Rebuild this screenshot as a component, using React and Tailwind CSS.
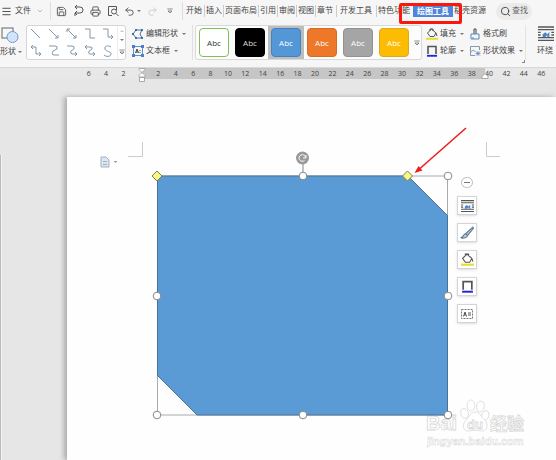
import React from 'react';
import { Menu, ChevronDown, Save, Printer, Undo2, Redo2, Search } from 'lucide-react';

const homeTabs = ['插入', '页面布局', '引用', '审阅', '视图', '章节'];

const swatches = [
  { name: '白色', style: 'bg-white border-[#83bd5b] text-[#333]' },
  { name: '黑色', style: 'bg-black border-black text-[#ddd]' },
  { name: '蓝色', style: 'bg-[#5497d6] border-[#4083c5] text-white', active: true },
  { name: '橙色', style: 'bg-[#ed7829] border-[#d66d25] text-white' },
  { name: '灰色', style: 'bg-[#a5a5a5] border-[#929292] text-white' },
  { name: '黄色', style: 'bg-[#fdbc04] border-[#e0a91a] text-white' },
];

const connectors = [
  'M1 1l9 9',
  'M1 1l9 9M7 10h3v-3',
  'M1 1l9 9M7 10h3v-3M4 1H1v3',
  'M1 1h5v9h5',
  'M1 1h5v8h5M9 7l2 2-2 2',
  'M1 2h5v7h5M9 7l2 2-2 2M3 0L1 2l2 2',
  'M1 1h6q3 0 2 3l-4 2q-2 4 1 4h5',
  'M1 1h5q3 0 2 3l-3 2q-1 3 1 3h5M9 7l2 2-2 2',
  'M1 2h5q3 0 2 2l-3 2q-1 3 1 3h5M9 7l2 2-2 2M3 0L1 2l2 2',
  'M9 2C6 0 2 1 3 4s6 2 6 5-5 3-7 1',
];

const marks = [6, 4, 2, '', ...Array.from({ length: 23 }, (_, i) => (i + 1) * 2)];

const handles = [
  [448, 176],
  [303, 176],
  [157, 296],
  [448, 296],
  [157, 415],
  [303, 415],
  [448, 415],
];

function Caret() {
  return (
    <svg className="w-1 h-1 shrink-0" viewBox="0 0 4 4">
      <path d="M0 1h4L2 3z" fill="#777" />
    </svg>
  );
}

function Icon({ children, className = 'w-3 h-3' }) {
  return (
    <svg className={`${className} shrink-0`} viewBox="0 0 12 12" fill="none" stroke="#555" strokeWidth="1">
      {children}
    </svg>
  );
}

function MoreIcon() {
  return (
    <Icon className="w-2 h-2">
      <path d="M2 3h8M3 6h6L6 9z" />
    </Icon>
  );
}

function FillIcon({ className }) {
  return (
    <Icon className={className}>
      <path d="M5.500 1L10 5 8 8.500H4L1.500 5zM4 3V1h3v2M10 5l1 3" />
      <path d="M0 10.800h12" stroke="#e6df2b" strokeWidth="2" />
    </Icon>
  );
}

function OutlineIcon({ className }) {
  return (
    <Icon className={className}>
      <path d="M2 9V1.500h8V9" strokeWidth="1.600" />
      <path d="M1 10.800h10" stroke="#2121d6" strokeWidth="1.800" />
    </Icon>
  );
}

function WrapIcon({ className }) {
  return (
    <Icon className={className}>
      <path d="M0 1.500h12M0 3.500h12M0 5.500h2M10 5.500h2M0 7.500h2M10 7.500h2M0 9.500h12M0 11.500h12" />
      <path d="M3.500 9V7l2-1.500L7 7l1.500-2v4H7V7.500L5.500 9z" fill="#4a84c4" stroke="none" />
    </Icon>
  );
}

function ToolButton({ icon, label, caret = true }) {
  return (
    <button className="flex items-center gap-[2px] h-[17px] whitespace-nowrap">
      {icon}
      <span>{label}</span>
      {caret && <span className="pl-[2px]"><Caret /></span>}
    </button>
  );
}

function TopBar() {
  return (
    <div className="flex items-center h-[22px] whitespace-nowrap">
      <button aria-label="菜单" className="w-[15px] pl-px">
        <Menu className="w-[11px] h-[11px]" strokeWidth={2} />
      </button>
      <button className="flex items-center gap-[5px] w-[35px]">
        文件
        <ChevronDown className="w-2 h-2 shrink-0 text-[#999]" />
      </button>
      <div className="flex items-center w-[133px] h-[18px] border-x border-[#dedede] pl-[5px] pr-2 text-[#555]">
        <button aria-label="保存" className="w-[17px]"><Save className="w-[11px] h-[11px]" /></button>
        <button aria-label="输出" className="w-[17px]">
          <Icon>
            <path d="M2 2h5q3 0 3 3t-3 3H2M4 0L2 2l2 2M4 6L2 8l2 2M2 8v3" />
          </Icon>
        </button>
        <button aria-label="打印" className="w-[17px]"><Printer className="w-[11px] h-[11px]" /></button>
        <button aria-label="打印预览" className="w-[18px]">
          <Icon>
            <path d="M5 10.500H1.500v-9h8V5" />
            <circle cx="7" cy="6.500" r="2.500" />
            <path d="M9 8.500l2.500 2.500" />
          </Icon>
        </button>
        <button aria-label="撤销" className="flex items-center gap-[2px] w-[23px]">
          <Undo2 className="w-[11px] h-[11px]" />
          <Caret />
        </button>
        <button aria-label="恢复" className="w-[19px] text-[#ccc]"><Redo2 className="w-[11px] h-[11px]" /></button>
        <button aria-label="更多"><MoreIcon /></button>
      </div>

      <nav className="relative flex items-center pl-[2px]">
        <button className="pl-px pr-[2px]">开始</button>
        {homeTabs.map((tab) => (
          <button key={tab} className="border-l border-[#ccc] px-px">{tab}</button>
        ))}
        <button className="ml-[2px] border-l border-[#ccc] pl-[3px] pr-1">开发工具</button>
        <button className="border-l border-[#ccc] pl-px pr-[3px]">特色功能</button>
        <button className="bg-[#4f86dc] text-white font-bold px-1 h-[11px] leading-[11px]">绘图工具</button>
        <button className="pl-px">稻壳资源</button>
        {/* callout around the active tab */}
        <div className="absolute right-[24px] -top-[2px] w-[63px] h-[21px] border-[3px] border-[#fb170c] rounded-[2px] pointer-events-none" />
      </nav>

      <label className="flex items-center gap-px ml-[10px] h-[17px] w-9 rounded-full bg-[#ebebeb] pl-1 text-[#666]">
        <Search className="w-[11px] h-[11px] shrink-0 text-[#444]" />
        <input aria-label="查找" placeholder="查找" className="w-5 bg-transparent outline-none placeholder:text-[#666]" />
      </label>
    </div>
  );
}

function Ribbon() {
  return (
    <div className="relative flex h-[45px] pt-[3px] pb-[7px]">
      <button className="flex flex-col w-[26px] shrink-0 items-start gap-[3px]">
        <svg className="w-[18px] h-[18px] ml-px" viewBox="0 0 18 18">
          <rect x="1" y="3" width="11" height="10" fill="none" stroke="#666" />
          <circle cx="11.500" cy="12" r="5.500" fill="#d3e3f8" stroke="#6f9bd2" />
        </svg>
        <span className="flex items-center gap-[2px] whitespace-nowrap">形状<Caret /></span>
      </button>

      <div className="flex w-[100px] h-[35px] shrink-0 border border-[#d5d5d5] rounded-[3px] bg-white">
        <div className="grid grid-cols-5 flex-1 items-center justify-items-center">
          {connectors.map((d, i) => (
            <button key={d} aria-label={`连接符 ${i + 1}`}>
              <svg className="w-3 h-3" viewBox="0 0 12 12" fill="none" stroke="#8397a9" strokeWidth="1">
                <path d={d} />
              </svg>
            </button>
          ))}
        </div>
        <div className="flex flex-col w-2 items-center justify-around border-l border-[#eee]">
          <span className="rotate-180 opacity-40 flex"><Caret /></span>
          <Caret />
          <MoreIcon />
        </div>
      </div>

      <div className="w-[67px] shrink-0 pl-[6px] border-r border-[#e0e0e0]">
        <ToolButton
          label="编辑形状"
          icon={
            <Icon>
              <path d="M4 2h6L8 6l2 4H4L1 6z" stroke="#4c6f9e" />
              <path d="M3 1h2v2H3zM9 1h2v2H9zM0 5h2v2H0zM3 9h2v2H3zM9 9h2v2H9z" fill="#3f6ca6" stroke="none" />
            </Icon>
          }
        />
        <ToolButton
          label="文本框"
          icon={
            <Icon>
              <rect x="1.500" y="1.500" width="9" height="9" stroke="#5c92d1" />
              <path d="M0 0h3v3H0zM9 0h3v3H9zM0 9h3v3H0zM9 9h3v3H9z" fill="#4681c8" stroke="none" />
              <path d="M3.500 8L5 4l1.500 4M4 7h2M8 5v1M8 7v1" stroke="#444" />
            </Icon>
          }
        />
      </div>

      <div className="flex w-[227px] h-[35px] shrink-0 ml-[2px] border border-[#d8d8d8] rounded-[3px] bg-[#fcfcfc]">
        {swatches.map((s) => (
          <div key={s.name} className={s.active ? 'w-9 px-[3px] py-[2px] bg-[#bdbdbd]' : 'w-9 px-[3px] py-[2px]'}>
            <button aria-label={s.name} className={`w-full h-[29px] border rounded-[4px] text-[8px] font-['Open_Sans',sans-serif] ${s.style}`}>
              Abc
            </button>
          </div>
        ))}
        <div className="flex flex-1 items-center justify-center">
          <MoreIcon />
        </div>
      </div>

      <div className="grid grid-cols-[43px_1fr] w-[104px] shrink-0 pl-1 border-r border-[#e4e4e4] content-start">
        <ToolButton label="填充" icon={<FillIcon />} />
        <ToolButton
          label="格式刷"
          caret={false}
          icon={
            <Icon>
              <path d="M5 6V1h2v5" stroke="#444" />
              <path d="M2 6h8v5H2zM4 11V9" stroke="#5a87ba" />
            </Icon>
          }
        />
        <ToolButton label="轮廓" icon={<OutlineIcon />} />
        <ToolButton
          label="形状效果"
          icon={
            <Icon>
              <path d="M6 10.500H1.500v-9h9V5M1.500 7l3-2 2 2" stroke="#8798aa" />
              <path d="M9 6v5M6.500 8.500h5M7 6.500l4 4M11 6.500l-4 4" stroke="#537fb2" strokeWidth="0.700" />
            </Icon>
          }
        />
      </div>
      <span className="absolute right-[31px] bottom-1 w-[3px] h-[3px] border-r border-b border-[#888]" />

      <button className="flex flex-col flex-1 min-w-0 items-start pl-[11px] gap-1 whitespace-nowrap">
        <span className="pl-px"><WrapIcon className="w-4 h-4" /></span>
        <span>环绕</span>
      </button>
    </div>
  );
}

function Ruler() {
  return (
    <div className="relative h-[11px] bg-[#e8e8e8] text-[7px] leading-[11px] text-[#444] font-['Open_Sans',sans-serif]">
      <div className="absolute inset-y-0 left-[141px] right-[71px] bg-[#c6c6c6]" />
      <div className="relative flex ml-20 mr-[6px] text-center">
        {marks.map((m, i) => (
          <span key={i} className="flex-1 basis-0 min-w-0">{m}</span>
        ))}
      </div>
      {/* indent markers */}
      <svg className="absolute left-[138px] top-0 w-2 h-[14px]" viewBox="0 0 8 14" fill="#fff" stroke="#999" strokeWidth="0.800">
        <path d="M1 0.500h6v1L4 4.500l-3-3zM4 4.500l3 3V9H1V7.500zM1.500 9.500h5v4h-5z" />
      </svg>
      <svg className="absolute right-[67px] top-[5px] w-2 h-[6px]" viewBox="0 0 8 6" fill="#fff" stroke="#999" strokeWidth="0.800">
        <path d="M4 0.500l3 3v2H1v-2z" />
      </svg>
    </div>
  );
}

function Watermark() {
  return (
    <g fill="#fff" stroke="#d8d8d8" strokeWidth="0.800" fontFamily="'Liberation Sans', 'Noto Sans CJK SC', sans-serif" fontWeight="bold">
      <ellipse cx="464.500" cy="413.500" rx="3.800" ry="5" transform="rotate(-15 464 413)" />
      <ellipse cx="471" cy="405.500" rx="3.800" ry="5.500" />
      <ellipse cx="480.500" cy="406.500" rx="3.800" ry="5.500" transform="rotate(10 480 406)" />
      <ellipse cx="485.500" cy="415.500" rx="3.500" ry="5" transform="rotate(20 485 415)" />
      <path d="M475 412c-4 0-5 4-8 7-6 5-4 13 2 12 4-1 8-1 12 0 6 1 8-6 4-11-4-3-5-8-10-8z" />
      <text x="426" y="430" fontSize="20">Bai</text>
      <text x="467" y="429" fontSize="13">du</text>
      <text x="490" y="430" fontSize="17">经验</text>
      <text x="427" y="445" fontSize="11" strokeWidth="0.500">jingyan.baidu.com</text>
    </g>
  );
}

function Drawing() {
  return (
    <svg className="absolute left-0 top-0 w-[489px] h-[363px]" viewBox="67 97 489 363">
      <path d="M142.500 142v14.500H128M486.500 142v14.500H500" fill="none" stroke="#ccc" />
      <path d="M101 157h5l3 3v7h-8z" fill="#dde5ef" stroke="#a3b1c3" />
      <path d="M103 161.500h4M103 164.500h4" stroke="#a3b1c3" />
      <path d="M113.500 161h4l-2 2z" fill="#999" />
      <Watermark />
      <rect x="157.500" y="176" width="290" height="239" fill="none" stroke="#aaa" />
      <path d="M157.500 176H408l39.500 39.500V415H197l-39.500-39.500z" fill="#5b9bd5" stroke="#4a7294" />
      <path d="M303 163v10" stroke="#888" />
      <circle cx="302.500" cy="158" r="6.500" fill="#999" />
      <path d="M305.500 157a3.300 3.300 0 1 0-1 3.500M306 155v3h-3" fill="none" stroke="#fff" />
      {handles.map(([x, y]) => (
        <circle key={`${x}-${y}`} cx={x} cy={y} r="3.800" fill="#fff" stroke="#888" />
      ))}
      <path d="M157 171l5 5-5 5-5-5zM407.500 171l5 5-5 5-5-5z" fill="#f6f884" stroke="#7d7d4a" />
      <path d="M466 128l-46 40.500" stroke="#f01d20" strokeWidth="1.600" />
      <path d="M414.500 173l4-7 4 4.500z" fill="#f01d20" />
    </svg>
  );
}

function FloatingTools() {
  const tools = [
    ['环绕方式', <WrapIcon className="w-[13px] h-[13px]" />],
    ['形状样式', (
      <Icon className="w-[14px] h-[14px]">
        <path d="M11 1L5 6.500 6.500 8 11.500 2zM5 6.500C3 7 3 9 1 10c2 1 5 0 5.500-2" fill="#b9d3ee" stroke="#64788c" />
      </Icon>
    )],
    ['形状填充', <FillIcon className="w-[13px] h-[13px]" />],
    ['形状轮廓', <OutlineIcon className="w-[13px] h-[13px]" />],
    ['编辑文字', (
      <Icon>
        <rect x="0.500" y="1.500" width="11" height="9" strokeDasharray="2 1" stroke="#777" />
        <path d="M2.500 8.500L4 4l1.500 4.500M3 7h2M7 5h3M7 7h3" />
      </Icon>
    )],
  ];

  return (
    <div className="absolute left-[390px] top-20 flex flex-col items-center gap-2">
      <button aria-label="收起" className="flex items-center justify-center w-[12px] h-[11px] rounded-full border border-[#bbb] bg-white">
        <span className="w-[6px] h-px bg-[#777]" />
      </button>
      {tools.map(([label, icon]) => (
        <button
          key={label}
          aria-label={label}
          className="flex items-center justify-center w-5 h-[19px] bg-white border border-[#d5d5d5] shadow-sm"
        >
          {icon}
        </button>
      ))}
    </div>
  );
}

export default function App() {
  return (
    <div className="min-h-screen flex flex-col overflow-hidden bg-[#e6e6e6] text-[#444] text-[8px] leading-3 font-['Liberation_Sans','Noto_Sans_CJK_SC',sans-serif]">
      <header className="bg-[#f6f6f6] border-b border-[#d8d8d8]">
        <TopBar />
        <Ribbon />
      </header>
      <Ruler />
      <main className="flex flex-1 pt-[18px]">
        <div className="w-[2px] mt-[58px] bg-[#f3f3f3] border-l border-[#bbb]" />
        <div className="relative flex-1 ml-[65px] min-h-[363px] bg-[#fefefe] shadow-[-3px_0_5px_#aaa]">
          <Drawing />
          <FloatingTools />
        </div>
      </main>
    </div>
  );
}
